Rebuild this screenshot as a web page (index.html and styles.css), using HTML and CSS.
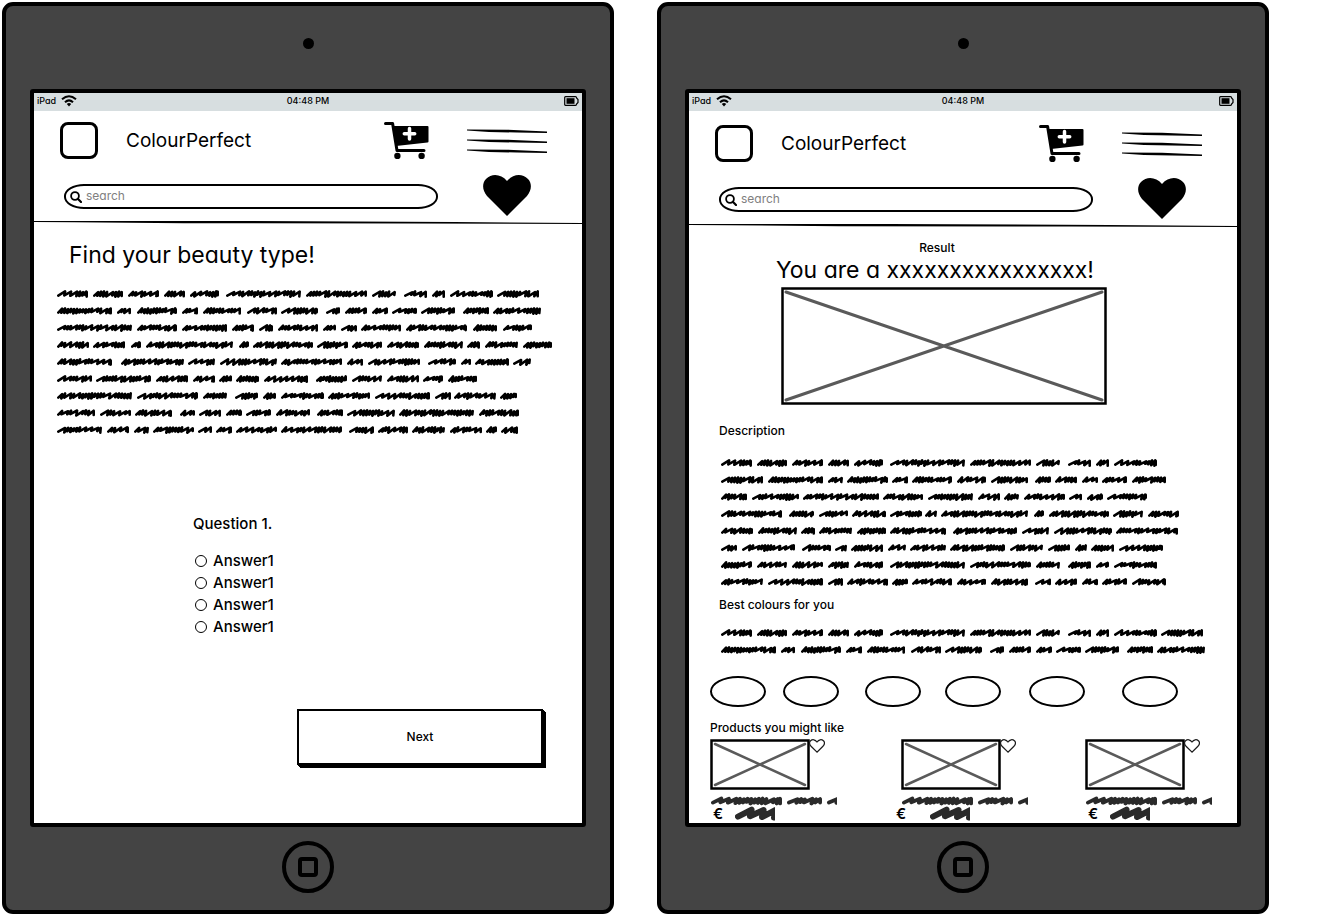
FILE: index.html
```html
<!DOCTYPE html>
<html lang="en">
<head>
<meta charset="utf-8">
<title>ColourPerfect wireframes</title>
<link rel="stylesheet" href="styles.css">
</head>
<body>
<svg class="defs" aria-hidden="true">
  <symbol id="wifi" viewBox="0 0 16 12">
    <g fill="none" stroke="#000" stroke-width="2"><path d="M1 4.300Q8-1.800 15 4.300"/><path d="M4 7.300Q8 3.500 12 7.300"/></g>
    <path d="M5.800 9Q8 7.200 10.200 9L8 11.600z"/>
  </symbol>
  <symbol id="battery" viewBox="0 0 15 10">
    <path d="M1.500.7H11.500Q12.500.7 12.600 2L14 3.500V6.500L12.600 8Q12.500 9.300 11.500 9.300H1.500Q.7 9.300.7 8.500V1.500Q.7.700 1.500.7z" fill="none" stroke="#000" stroke-width="1.200"/>
    <path d="M2.500 2.200H10.500V7.800H2.500z"/>
  </symbol>
  <symbol id="cart" viewBox="0 0 45 37">
    <path d="M1.500 1.500H8.600L13 28.500H40" fill="none" stroke="#000" stroke-width="3" stroke-linecap="round" stroke-linejoin="round"/>
    <path d="M8.500 4H43.500Q44.500 4 44.500 5V19.500Q44.500 20.400 43.500 20.500L12 24z"/>
    <circle cx="13.400" cy="34" r="3.200"/><circle cx="37.600" cy="34" r="3.200"/>
    <path d="M25.500 6.500V17M20.300 11.700H30.700" stroke="#fff" stroke-width="3.500" stroke-linecap="round"/>
  </symbol>
  <symbol id="menu" viewBox="0 0 80 26">
    <path d="M0 1.500 40 1.700 80 3.500V5L50 4.500 22 4 0 2.500z"/>
    <path d="M0 11.500 40 11.700 80 13.500V15L50 14.500 22 14 0 12.500z"/>
    <path d="M0 21.500 40 21.700 80 23.500V25L50 24.500 22 24 0 22.500z"/>
  </symbol>
  <symbol id="heart" viewBox="0 0 48 41">
    <path d="M24 41 4 21C-1 15-1 8 3 4 9-2 18-1 24 6 30-1 39-2 45 4 49 8 49 15 44 21z"/>
  </symbol>
  <symbol id="heart-line" viewBox="0 0 16 14">
    <path d="M8 13.200 1.800 7C.2 5 .3 3 1.600 1.800 3.500 0 6.200.5 8 3 9.800.5 12.500 0 14.400 1.800 15.700 3 15.800 5 14.200 7z" fill="none" stroke="#1c1c1c" stroke-width="1.200"/>
  </symbol>
  <symbol id="glass" viewBox="0 0 12 12">
    <circle cx="5" cy="5" r="3.900" fill="none" stroke="#000" stroke-width="1.800"/><path d="M7.800 7.800 11 11" stroke="#000" stroke-width="2.200" stroke-linecap="round"/>
  </symbol>
  <symbol id="rule" viewBox="0 0 548 5" preserveAspectRatio="none">
    <path d="M0 1 200 1 420 2 548 3V4L380 3.600 150 3.200 40 2.300 0 2z"/>
  </symbol>
</svg>

<section class="device">
  <span class="camera"></span>
  <main class="screen">
    <div class="status"><span class="carrier">iPad <svg width="16" height="12"><use href="#wifi"/></svg></span><span>04:48 PM</span><svg class="battery" width="15" height="10"><use href="#battery"/></svg></div>
    <header class="header">
      <div class="brand-row">
        <span class="logo"></span><span class="brand">ColourPerfect</span>
        <button class="icon" aria-label="Cart"><svg width="45" height="37"><use href="#cart"/></svg></button>
        <button class="icon" aria-label="Menu"><svg width="80" height="26"><use href="#menu"/></svg></button>
      </div>
      <div class="search-row">
        <label class="search"><svg width="12" height="12"><use href="#glass"/></svg><input type="text" placeholder="search" aria-label="search"></label>
        <button class="icon" aria-label="Favourites"><svg width="48" height="41"><use href="#heart"/></svg></button>
      </div>
    </header>
    <svg class="rule"><use href="#rule"/></svg>
    <div class="quiz">
      <h1 class="headline">Find your beauty type!</h1>
      <svg class="scribble" data-text="intro"></svg>
      <fieldset class="question">
        <legend>Question 1.</legend>
        <label><input type="radio" name="q1">Answer1</label>
        <label><input type="radio" name="q1">Answer1</label>
        <label><input type="radio" name="q1">Answer1</label>
        <label><input type="radio" name="q1">Answer1</label>
      </fieldset>
      <button class="next">Next</button>
    </div>
  </main>
  <button class="home" aria-label="Home"><span></span></button>
</section>

<section class="device">
  <span class="camera"></span>
  <main class="screen">
    <div class="status"><span class="carrier">iPad <svg width="16" height="12"><use href="#wifi"/></svg></span><span>04:48 PM</span><svg class="battery" width="15" height="10"><use href="#battery"/></svg></div>
    <header class="header header-low">
      <div class="brand-row">
        <span class="logo"></span><span class="brand">ColourPerfect</span>
        <button class="icon" aria-label="Cart"><svg width="45" height="37"><use href="#cart"/></svg></button>
        <button class="icon" aria-label="Menu"><svg width="80" height="26"><use href="#menu"/></svg></button>
      </div>
      <div class="search-row">
        <label class="search"><svg width="12" height="12"><use href="#glass"/></svg><input type="text" placeholder="search" aria-label="search"></label>
        <button class="icon" aria-label="Favourites"><svg width="48" height="41"><use href="#heart"/></svg></button>
      </div>
    </header>
    <svg class="rule"><use href="#rule"/></svg>
    <div class="result">
      <div class="result-top">
        <p class="small">Result</p>
        <h1 class="headline">You are a xxxxxxxxxxxxxxxx!</h1>
        <svg class="picture" viewBox="0 0 326 118"><path class="frame" d="M1.500 1.500H324.500V116.500H1.500z"/><path class="cross" d="M5 5 321 113M5 113 321 5"/></svg>
      </div>
      <h2 class="small inset">Description</h2>
      <svg class="scribble" data-text="description"></svg>
      <h2 class="small inset best">Best colours for you</h2>
      <svg class="scribble" data-text="colours"></svg>
      <div class="swatches"><span></span><span></span><span></span><span></span><span></span><span></span></div>
      <h2 class="small">Products you might like</h2>
      <div class="products">
        <article class="product">
          <div class="thumb"><svg width="100" height="51"><path class="frame" d="M1.500 1.500H98.500V49.500H1.500z"/><path class="cross" d="M5 5 95 46M5 46 95 5"/></svg><button class="icon" aria-label="Like"><svg width="16" height="14"><use href="#heart-line"/></svg></button></div>
          <svg class="scribble name" data-text="name"></svg>
          <div class="price"><span>€</span><svg class="scribble" data-text="price"></svg></div>
        </article>
        <article class="product">
          <div class="thumb"><svg width="100" height="51"><path class="frame" d="M1.500 1.500H98.500V49.500H1.500z"/><path class="cross" d="M5 5 95 46M5 46 95 5"/></svg><button class="icon" aria-label="Like"><svg width="16" height="14"><use href="#heart-line"/></svg></button></div>
          <svg class="scribble name" data-text="name"></svg>
          <div class="price price-wide"><span>€</span><svg class="scribble" data-text="price"></svg></div>
        </article>
        <article class="product">
          <div class="thumb"><svg width="100" height="51"><path class="frame" d="M1.500 1.500H98.500V49.500H1.500z"/><path class="cross" d="M5 5 95 46M5 46 95 5"/></svg><button class="icon" aria-label="Like"><svg width="16" height="14"><use href="#heart-line"/></svg></button></div>
          <svg class="scribble name" data-text="name"></svg>
          <div class="price"><span>€</span><svg class="scribble" data-text="price"></svg></div>
        </article>
      </div>
    </div>
  </main>
  <button class="home" aria-label="Home"><span></span></button>
</section>
<script src="scribble.js"></script>
</body>
</html>
```

FILE: styles.css
```css
* { box-sizing: border-box; }
body {
  margin: 0;
  min-height: 100vh;
  padding: 2px 49px 2px 2px;
  display: grid;
  grid-template-columns: 1fr 1fr;
  gap: 43px;
  background: #fff;
  color: #000;
  font: 13px/18px Inter, "Open Sans", sans-serif;
  font-feature-settings: "cv11";
}
svg { display: block; flex: none; }
button, input { font: inherit; font-feature-settings: inherit; color: inherit; }
h1, h2, p { margin: 0; font-weight: 400; }
.defs { position: absolute; width: 0; height: 0; }

.device {
  display: flex;
  flex-direction: column;
  align-items: center;
  padding: 32px 24px 17px;
  border: 4px solid #000;
  border-radius: 11px;
  background: #444;
}
.camera { width: 11px; height: 11px; margin-bottom: 40px; border-radius: 50%; background: #000; }
.screen {
  flex: 1;
  align-self: stretch;
  display: flex;
  flex-direction: column;
  border: 4px solid #000;
  border-radius: 3px;
  background: #fff;
}
.home {
  display: grid;
  place-items: center;
  width: 52px;
  height: 52px;
  margin-top: 14px;
  padding: 0;
  border: 4px solid #000;
  border-radius: 50%;
  background: none;
}
.home span { width: 20px; height: 20px; border: 4px solid #000; border-radius: 4px; }

.status {
  display: grid;
  grid-template-columns: 1fr auto 1fr;
  align-items: center;
  height: 18px;
  padding: 0 3px 2px;
  background: #d7dee0;
  font-size: 9px;
  line-height: 16px;
  font-weight: 500;
}
.carrier { display: flex; align-items: center; gap: 5px; }
.battery { justify-self: end; }

.header { padding-top: 11px; }
.header-low { padding-top: 14px; }
.icon { display: block; padding: 0; border: 0; background: none; }
.brand-row { display: flex; align-items: center; height: 37px; padding: 0 35px 0 26px; gap: 38px; }
.logo { width: 38px; height: 37px; border: 3px solid #000; border-radius: 8px; }
.brand { flex: 1; margin-left: -10px; font-size: 19px; line-height: 24px; }
.search-row { display: flex; align-items: center; gap: 45px; margin-top: 16px; padding: 0 51px 0 30px; }
.search {
  flex: 1;
  display: flex;
  align-items: center;
  gap: 4px;
  height: 25px;
  margin-top: 2px;
  padding: 0 4px;
  border: 2px solid #000;
  border-radius: 20px / 12px;
}
.search input { flex: 1; min-width: 0; height: 20px; padding: 0 0 2px; border: 0; outline: 0; background: none; font-size: 12px; }
.search input::placeholder { color: #808080; opacity: 1; }
.rule { width: 100%; height: 5px; margin-top: 4px; }

.headline { font-size: 23px; line-height: 28px; }
.small { font-size: 12px; line-height: 18px; font-weight: 500; }
.scribble { fill: none; stroke: #000; stroke-linecap: round; stroke-linejoin: round; max-width: 100%; }

.quiz { flex: 1; display: flex; flex-direction: column; padding: 16px 22px 58px; }
.quiz .headline { padding-left: 13px; }
.quiz .scribble { margin-top: 16px; }
.question { margin: 76px 0 0 137px; padding: 0; border: 0; font-size: 15px; line-height: 22px; font-weight: 500; }
.question legend { padding: 0; margin-bottom: 16px; line-height: 20px; }
.question label { display: flex; align-items: center; gap: 6px; margin-left: 2px; }
.question input { appearance: none; width: 12px; height: 12px; margin: 0; border: 1px solid #000; border-radius: 50%; }
.next {
  align-self: flex-end;
  width: 246px;
  height: 56px;
  margin: auto 17px 0 0;
  border: 2px solid #000;
  border-radius: 0;
  background: #fff;
  box-shadow: 1px 1px #000, 2px 2px #000, 3px 3px #000;
  font-size: 12px;
  font-weight: 500;
}

.result { padding: 11px 21px 0; }
.result-top { display: flex; flex-direction: column; align-items: center; padding-right: 32px; }
.result-top .headline { line-height: 27px; padding-right: 24px; }
.result-top .small { padding-right: 20px; }
.picture { width: 326px; height: 118px; margin: 3px 6px 17px 0; }
.frame { fill: #fff; stroke: #000; stroke-width: 2.500; }
.cross { fill: none; stroke: #5a5a5a; stroke-width: 3; stroke-linecap: round; }
.thumb .cross { stroke-width: 2.500; }
.inset { padding-left: 9px; }
.result > .scribble { margin: 14px 0 0 10px; }
.result > .best { margin-top: 6px; }
.result > .best + .scribble { margin-top: 10px; }
.swatches {
  display: grid;
  grid-template-columns: 73fr 82fr 80fr 84fr 93fr 56px;
  margin: 18px 38px 12px 0;
}
.swatches span { width: 56px; height: 31px; border: 2px solid #000; border-radius: 50%; }
.products { display: grid; grid-template-columns: 191fr 184fr 131fr; margin-top: 2px; }
.thumb { display: flex; align-items: flex-start; }
.thumb .icon { margin-left: -1px; }
.product .scribble { stroke: #2a2a2a; }
.product .name { margin-top: 6px; }
.price { display: flex; align-items: center; gap: 12px; height: 16px; padding-left: 3px; font-size: 15px; line-height: 16px; font-weight: 600; }
.price-wide { gap: 24px; padding: 0; margin-left: -5px; }
```

FILE: scribble.js
```js
// Draws placeholder text: each line is a list of start-end word extents.
const first = "1-32 37-67 72-103 108-129 134-163 170-245 250-311 316-340 348-371 376-389 394-437";
const second = "1-56 61-75 81-121 126-142 147-185 191-221 225-262 270-284 289-311 316-332 336-361 365-399 407-433 437-485";
const wrapped = "1-43 48-103 108-123 127-168 172-188 192-232 237-266 271-308 315-331 335-357 362-378 382-407 412-446";

const body = { width: 500, pitch: 17, top: 9, amp: 2.7, step: 4, stroke: 2.6 };
const texts = {
  intro: { ...body, lines: [
    first + " 441-483",
    second,
    "1-76 81-121 126-171 176-198 203-217 222-262 267-280 285-301 305-345 350-411 417-441 447-476",
    "1-33 37-69 75-85 90-177 183-193 197-257 261-292 296-326 331-363 368-407 411-424 429-462 467-496",
    "1-56 65-128 132-159 164-221 225-286 291-307 312-364 372-400 405-415 419-453 457-475",
    "1-36 40-95 100-132 137-159 163-176 180-203 208-252 260-291 296-326 331-363 367-387 392-421",
    "1-76 81-142 147-171 179-202 207-220 225-268 272-314 319-374 379-395 398-440 444-461",
    "1-39 44-75 79-116 124-139 143-165 170-186 190-215 220-254 261-287 291-339 343-418 423-463",
    "1-46 51-73 78-93 97-138 142-156 160-176 180-221 225-286 293-318 322-352 356-389 394-426 430-441 445-462"
  ] },
  description: { ...body, width: 486, lines: [
    first,
    wrapped,
    "1-27 32-79 83-159 163-203 208-253 258-280 284-299 304-345 349-362 367-383 387-427",
    "1-62 69-94 99-128 132-166 170-202 205-217 221-308 314-324 329-389 393-423 428-459",
    "1-33 38-77 81-95 99-132 137-166 170-226 233-297 302-329 334-392 396-458",
    "1-17 22-75 82-111 115-127 131-163 168-186 190-226 230-285 290-323 328-350 355-367 371-394 399-443",
    first,
    wrapped
  ] },
  colours: { ...body, width: 486, lines: [first + " 441-483", second] },
  name: { width: 127, pitch: 10, top: 5, amp: 2.6, step: 5, stroke: 3.8, lines: ["1-72 77-112 117-135"] },
  price: { width: 40, pitch: 16, top: 8, amp: 4.4, step: 8, stroke: 6, lines: ["0-54"] }
};

// A word is a run of leaning peaks; a long step leaves a visible diagonal.
function word(start, end, y, t, rand) {
  const r = t.stroke / 2;
  let x = start + r;
  const stop = end - r;
  let d = `M${x.toFixed(1)} ${(y + t.amp * 0.6).toFixed(1)}`;
  while (x < stop - 1) {
    const step = t.step * (rand() < 0.35 ? 1.5 : 0.75);
    const up = Math.min(x + step + t.step * 0.2, stop);
    const down = Math.min(x + step, stop);
    d += `L${up.toFixed(1)} ${(y - t.amp * (0.6 + rand() * 0.4)).toFixed(1)}`;
    d += `L${down.toFixed(1)} ${(y + t.amp * (0.3 + rand() * 0.7)).toFixed(1)}`;
    x += step;
  }
  return d;
}

document.querySelectorAll("[data-text]").forEach(svg => {
  const t = texts[svg.dataset.text];
  let seed = 7;
  const rand = () => (seed = (seed * 16807) % 2147483647) / 2147483647;
  svg.setAttribute("width", t.width);
  svg.setAttribute("height", t.pitch * t.lines.length);
  const path = document.createElementNS("http://www.w3.org/2000/svg", "path");
  path.setAttribute("stroke-width", t.stroke);
  path.setAttribute("d", t.lines.map((line, i) => line.split(" ").map(w => {
    const [a, b] = w.split("-").map(Number);
    return word(a, b, t.top + i * t.pitch, t, rand);
  }).join("")).join(""));
  svg.append(path);
});
```
